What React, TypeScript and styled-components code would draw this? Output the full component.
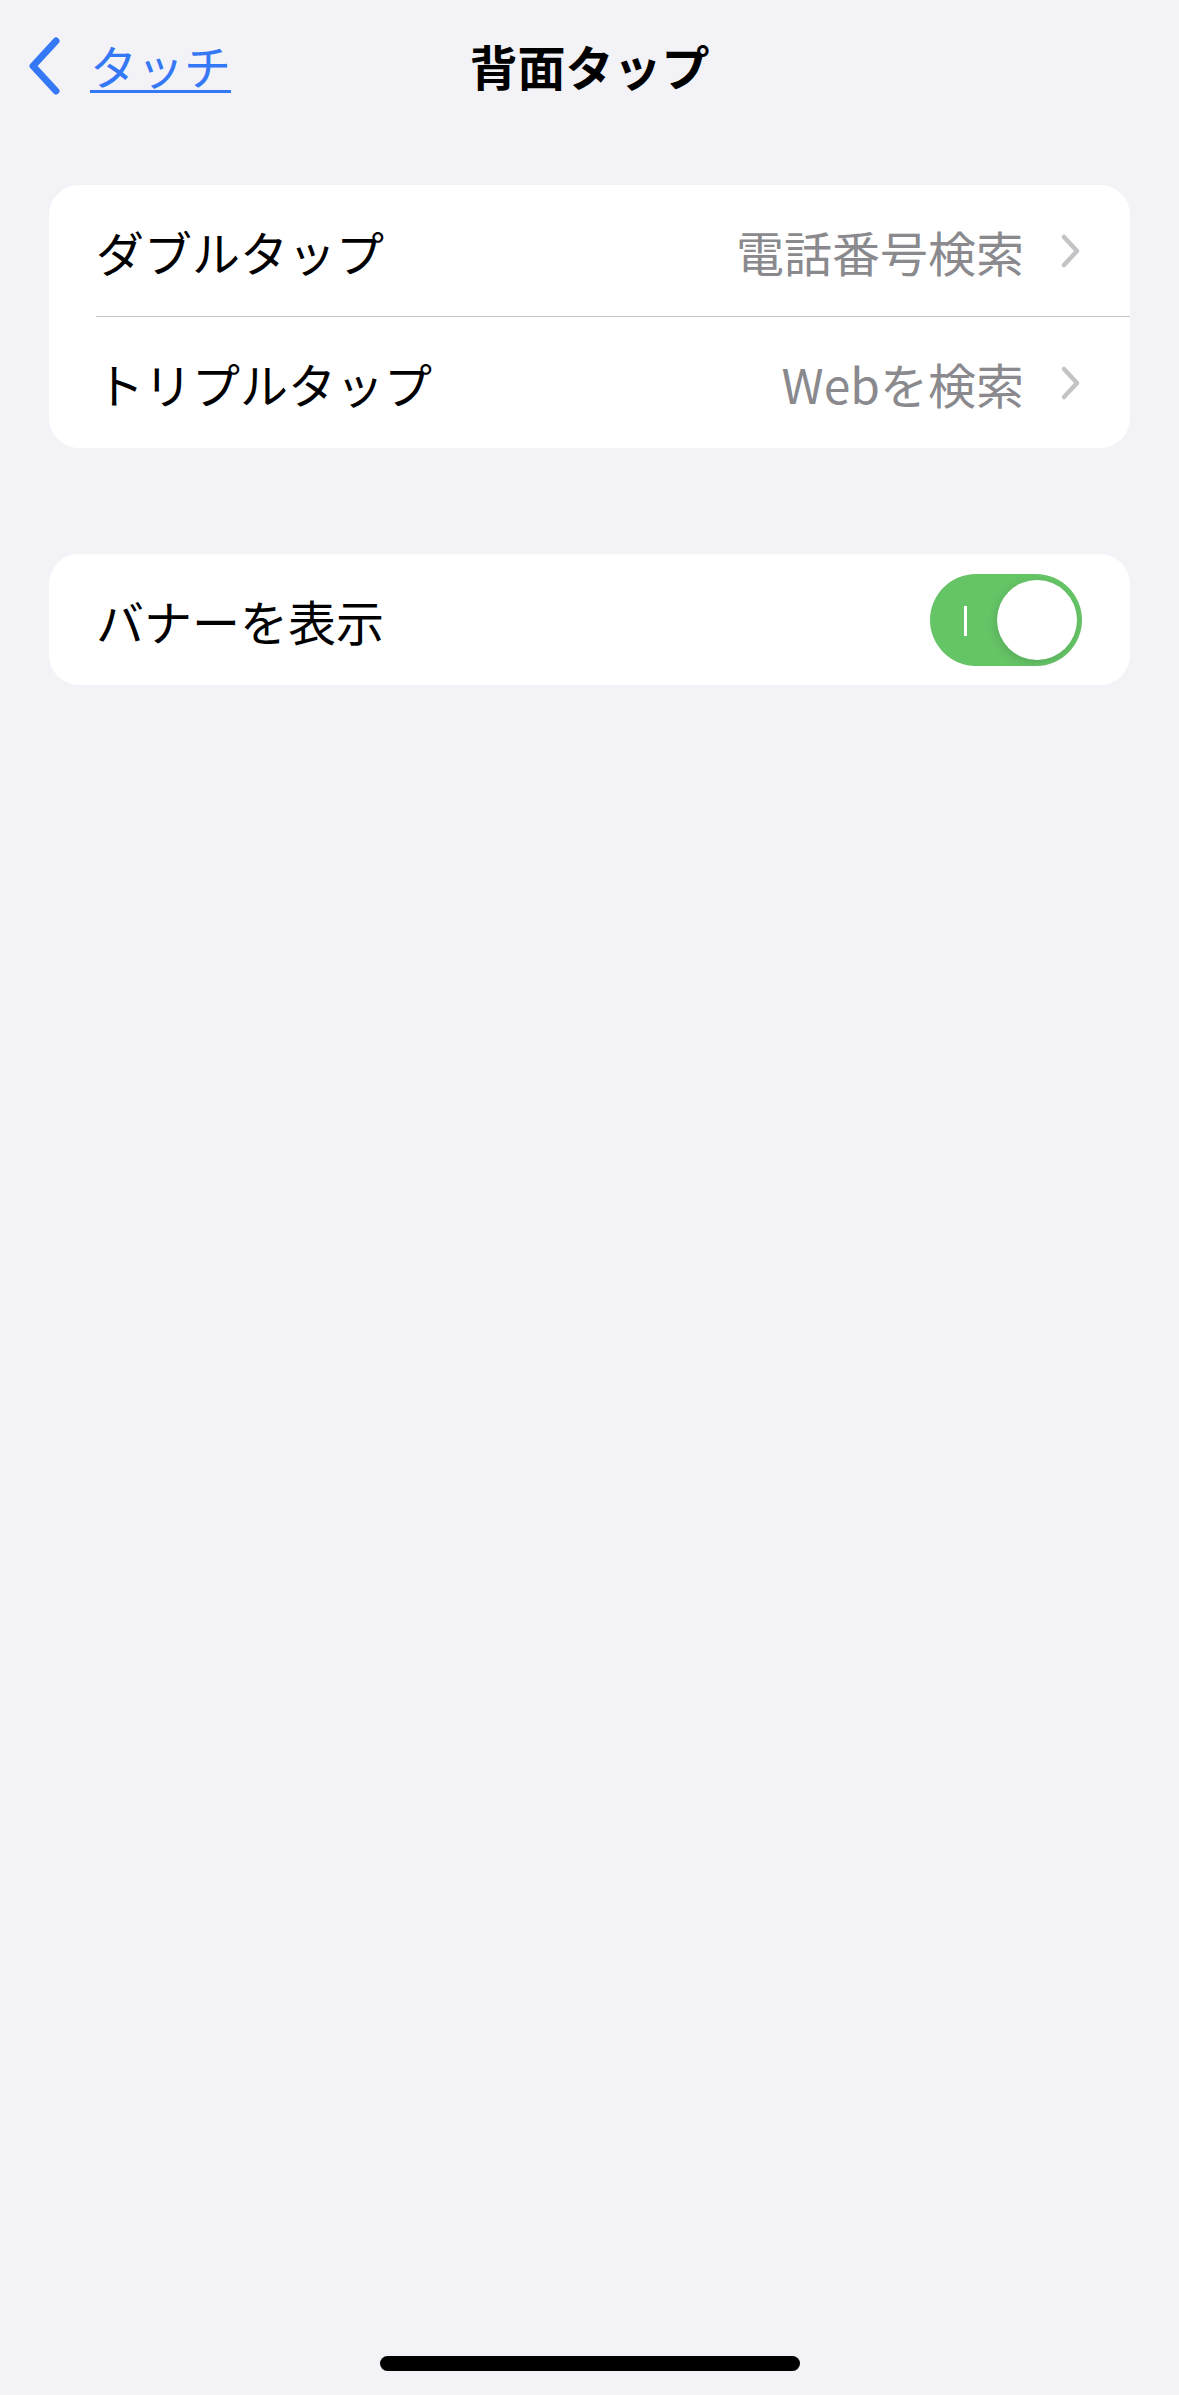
import React from "react";
import styled, { createGlobalStyle } from "styled-components";

const GlobalStyle = createGlobalStyle`
  html, body {
    margin: 0;
    padding: 0;
    background: #f2f2f7;
  }
  body {
    font-family: "Noto Sans CJK JP", "Noto Sans", sans-serif;
    -webkit-font-smoothing: antialiased;
  }
`;

interface IRowProps {
  label: string;
  value: string;
  divider?: boolean;
}

function LinkRow(props: IRowProps) {
  return (
    <Row>
      <RowInner $divider={props.divider}>
        <RowLabel>{props.label}</RowLabel>
        <RowValue>{props.value}</RowValue>
        <Chevron width="22" height="36" viewBox="0 0 22 36">
          <path
            d="M4 4 L17 18 L4 32"
            fill="none"
            stroke="#c4c4c7"
            strokeWidth="4.5"
            strokeLinecap="round"
            strokeLinejoin="round"
          />
        </Chevron>
      </RowInner>
    </Row>
  );
}

export default function App() {
  return (
    <>
      <GlobalStyle />
      <Page>
        <NavBar>
          <BackButton>
            <svg width="36" height="60" viewBox="0 0 36 60">
              <path
                d="M30 6 L7 31 L30 56"
                fill="none"
                stroke="#3478f6"
                strokeWidth="7"
                strokeLinecap="round"
                strokeLinejoin="round"
              />
            </svg>
            <BackLabel>タッチ</BackLabel>
          </BackButton>
          <Title>背面タップ</Title>
          <div />
        </NavBar>

        <Content>
          <Card>
            <LinkRow label="ダブルタップ" value="電話番号検索" />
            <LinkRow label="トリプルタップ" value="Webを検索" divider />
          </Card>

          <Card $gap>
            <Row>
              <RowInner>
                <RowLabel>バナーを表示</RowLabel>
                <Toggle>
                  <ToggleMark />
                  <Knob />
                </Toggle>
              </RowInner>
            </Row>
          </Card>
        </Content>

        <HomeIndicator />
      </Page>
    </>
  );
}

const Page = styled.div`
  display: flex;
  flex-direction: column;
  min-height: 2395px;
  background: #f2f2f7;
`;

const NavBar = styled.header`
  display: grid;
  grid-template-columns: 1fr auto 1fr;
  align-items: center;
  height: 130px;
`;

const BackButton = styled.div`
  display: flex;
  align-items: center;
  gap: 28px;
  padding-left: 26px;
`;

const BackLabel = styled.span`
  font-size: 47px;
  color: #3478f6;
  text-decoration: underline;
  text-decoration-thickness: 3px;
  text-underline-offset: 5px;
  line-height: 1;
  margin-top: -2px;
`;

const Title = styled.h1`
  margin: 0;
  font-size: 48px;
  font-weight: 700;
  color: #000;
  line-height: 1;
`;

const Content = styled.main`
  display: flex;
  flex-direction: column;
  padding: 55px 49px 0;
`;

const Card = styled.section<{ $gap?: boolean }>`
  background: #fff;
  border-radius: 30px;
  overflow: hidden;
  margin-top: ${(p) => (p.$gap ? "106px" : "0")};
`;

const Row = styled.div`
  display: flex;
  padding-left: 47px;
`;

const RowInner = styled.div<{ $divider?: boolean }>`
  flex: 1;
  display: flex;
  align-items: center;
  height: 131px;
  padding-right: 48px;
  border-top: ${(p) => (p.$divider ? "1px solid #c6c6c8" : "none")};
`;

const RowLabel = styled.span`
  flex: 1;
  font-size: 48px;
  color: #000;
  line-height: 1;
`;

const RowValue = styled.span`
  font-size: 48px;
  color: #8a8a8e;
  line-height: 1;
  margin-right: 36px;
`;

const Chevron = styled.svg`
  display: block;
`;

const Toggle = styled.div`
  display: flex;
  align-items: center;
  box-sizing: border-box;
  width: 152px;
  height: 92px;
  padding: 0 5px 0 34px;
  border-radius: 46px;
  background: #65c466;
`;

const ToggleMark = styled.span`
  width: 3px;
  height: 30px;
  background: #fff;
  margin-top: 3px;
`;

const Knob = styled.span`
  margin-left: auto;
  width: 80px;
  height: 80px;
  border-radius: 50%;
  background: #fff;
  box-shadow: -2px 3px 8px rgba(0, 0, 0, 0.12);
`;

const HomeIndicator = styled.div`
  margin: auto auto 24px;
  width: 420px;
  height: 15px;
  border-radius: 8px;
  background: #000;
`;
